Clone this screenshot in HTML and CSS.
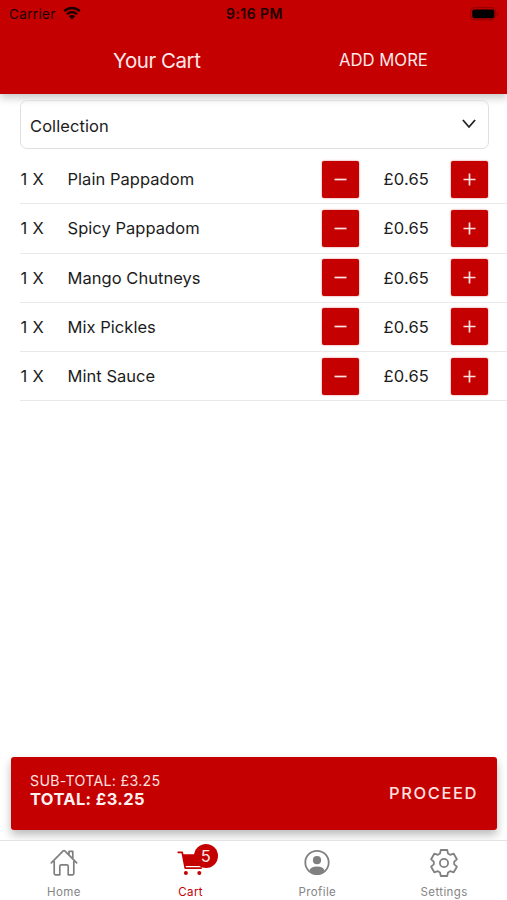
FILE: index.html
```html
<!DOCTYPE html>
<html lang="en">
<head>
<meta charset="utf-8">
<title>Your Cart</title>
<link rel="stylesheet" href="styles.css">
</head>
<body>
<div class="app">
  <header class="header">
    <div class="status">
      <div class="carrier"><span>Carrier</span>
        <svg width="18" height="14" viewBox="0 0 18 14"><path d="M1.2 5.1a11.2 11.2 0 0 1 15.6 0M4 8.1a7.2 7.2 0 0 1 10 0" fill="none" stroke="#1c0000" stroke-width="2.4"/><path d="M5.8 10.2a4.6 4.6 0 0 1 6.4 0L9 13.6z" fill="#1c0000"/></svg>
      </div>
      <div class="time">9:16 PM</div>
      <div class="battery"><svg width="30" height="14" viewBox="0 0 30 14"><rect x=".7" y=".7" width="25" height="12.2" rx="3.5" fill="none" stroke="#8e0000"/><rect x="2.3" y="2.5" width="22" height="8.8" rx="2" fill="#000"/><path d="M27.3 4.7q2.5 2.1 0 4.2z" fill="#8e0000"/></svg></div>
    </div>
    <div class="titlebar">
      <h1>Your Cart</h1>
      <div class="add">ADD MORE</div>
    </div>
  </header>
  <main>
    <div class="select"><span>Collection</span><svg width="14" height="10" viewBox="0 0 14 10"><path d="M.9 1l6.1 7 6.1-7" fill="none" stroke="#222" stroke-width="1.8"/></svg></div>
    <div class="list">
      <div class="row"><span class="qty">1 X</span><span class="name">Plain Pappadom</span><div class="btn"><svg width="13" height="13" viewBox="0 0 13 13"><path d="M.5 6.5h12"/></svg></div><span class="price">£0.65</span><div class="btn"><svg width="13" height="13" viewBox="0 0 13 13"><path d="M.5 6.5h12M6.5.5v12"/></svg></div></div>
      <div class="row"><span class="qty">1 X</span><span class="name">Spicy Pappadom</span><div class="btn"><svg width="13" height="13" viewBox="0 0 13 13"><path d="M.5 6.5h12"/></svg></div><span class="price">£0.65</span><div class="btn"><svg width="13" height="13" viewBox="0 0 13 13"><path d="M.5 6.5h12M6.5.5v12"/></svg></div></div>
      <div class="row"><span class="qty">1 X</span><span class="name">Mango Chutneys</span><div class="btn"><svg width="13" height="13" viewBox="0 0 13 13"><path d="M.5 6.5h12"/></svg></div><span class="price">£0.65</span><div class="btn"><svg width="13" height="13" viewBox="0 0 13 13"><path d="M.5 6.5h12M6.5.5v12"/></svg></div></div>
      <div class="row"><span class="qty">1 X</span><span class="name">Mix Pickles</span><div class="btn"><svg width="13" height="13" viewBox="0 0 13 13"><path d="M.5 6.5h12"/></svg></div><span class="price">£0.65</span><div class="btn"><svg width="13" height="13" viewBox="0 0 13 13"><path d="M.5 6.5h12M6.5.5v12"/></svg></div></div>
      <div class="row"><span class="qty">1 X</span><span class="name">Mint Sauce</span><div class="btn"><svg width="13" height="13" viewBox="0 0 13 13"><path d="M.5 6.5h12"/></svg></div><span class="price">£0.65</span><div class="btn"><svg width="13" height="13" viewBox="0 0 13 13"><path d="M.5 6.5h12M6.5.5v12"/></svg></div></div>
    </div>
  </main>
  <div class="checkout">
    <div class="totals"><div class="sub">SUB-TOTAL: £3.25</div><div class="total">TOTAL: £3.25</div></div>
    <div class="proceed">PROCEED</div>
  </div>
  <nav class="tabs">
    <div class="tab"><svg width="30" height="30" viewBox="0 0 30 30" fill="none" stroke="#808080" stroke-width="1.7" stroke-linejoin="round" stroke-linecap="round"><path d="M5.2 13v12.6q0 1.2 1.2 1.2h4.4v-8.6q0-1.4 1.4-1.4h5.6q1.4 0 1.4 1.4v8.6h4.4q1.2 0 1.2-1.2V13M2.3 14.8L14.2 2.9q.8-.7 1.6 0L27.7 14.8M20 6.8V3.4h3.8v7.2"/></svg><span class="label">Home</span></div>
    <div class="tab active"><svg width="30" height="30" viewBox="0 0 30 30"><path d="M2.2 4.3h4l3 15.8h16" fill="none" stroke="#c40000" stroke-width="1.7" stroke-linecap="round" stroke-linejoin="round"/><path d="M6.5 6.2h21.2l-2.5 11.8H8.8z" fill="#c40000"/><circle cx="9.9" cy="25.1" r="2" fill="#c40000"/><circle cx="23.3" cy="25.1" r="2" fill="#c40000"/></svg><span class="badge">5</span><span class="label">Cart</span></div>
    <div class="tab"><svg width="30" height="30" viewBox="0 0 30 30"><circle cx="15" cy="14.5" r="11.7" fill="none" stroke="#808080" stroke-width="1.8"/><circle cx="15" cy="12.2" r="4.1" fill="#808080"/><path d="M7.3 22.7q1.5-4.2 7.7-4.2t7.7 4.2q-3.2 3.4-7.7 3.4t-7.7-3.4z" fill="#808080"/></svg><span class="label">Profile</span></div>
    <div class="tab"><svg width="30" height="30" viewBox="-15 -15 30 30" fill="none" stroke="#808080" stroke-width="1.8" stroke-linejoin="round"><path d="M-4-9.5L-3.2-13H3.2L4-9.5 6.2-8.2 9.7-9.3 12.9-3.7 10.2-1.3V1.3L12.9 3.7 9.7 9.3 6.2 8.2 4 9.5 3.2 13H-3.2L-4 9.5-6.2 8.2-9.7 9.3-12.9 3.7-10.2 1.3V-1.3L-12.9-3.7-9.7-9.3-6.2-8.2z"/><circle r="4.1"/></svg><span class="label">Settings</span></div>
  </nav>
</div>
</body>
</html>
```
FILE: styles.css
```css
* { box-sizing: border-box; }
body { margin: 0; background: #fff; color: #1c1c1c; font-family: Inter, "Liberation Sans", sans-serif; font-size: 16.5px; }
.app { width: 507px; height: 900px; display: flex; flex-direction: column; overflow: hidden; white-space: nowrap; }
svg { display: block; flex: none; }
.header { height: 94px; flex: none; background: #c40000; box-shadow: 0 4px 8px rgba(0,0,0,.22); }
.status { height: 27px; display: grid; grid-template-columns: 1fr auto 1fr; align-items: center; padding: 0 7px 0 9px; color: #1c0000; font-size: 13.5px; }
.carrier { display: flex; align-items: center; gap: 7px; letter-spacing: .35px; }
.carrier svg { margin-top: -2px; }
.time { font-weight: 600; font-size: 14px; letter-spacing: .45px; }
.battery { display: flex; justify-content: flex-end; }
.titlebar { display: grid; grid-template-columns: 226px 1fr; height: 66px; align-items: center; padding-left: 113px; color: #ffe9e9; }
h1 { margin: 0; font-size: 20.5px; font-weight: 400; letter-spacing: -.45px; }
.add { font-size: 16.7px; margin-top: -1px; }
main { flex: 1; padding-top: 6px; }
.select { height: 49px; margin: 0 18px 0 20px; padding: 3px 13px 0 9px; border: 1px solid #e0e0e0; border-radius: 7px; display: flex; align-items: center; justify-content: space-between; letter-spacing: .08px; }
.select svg { margin-top: -5px; margin-right: -1px; }
.list { margin: 6px 0 0 20px; }
.row { height: 49.25px; display: grid; grid-template-columns: 47.5px 254.5px 37px 91.5px 37px; align-items: center; border-bottom: 1px solid #e9e9e9; }
.qty { letter-spacing: .3px; padding-left: .5px; }
.name { letter-spacing: .04px; }
.price { text-align: center; padding-left: 3px; letter-spacing: .15px; }
.btn { width: 37px; height: 37px; border-radius: 2px; background: #c40000; display: grid; place-items: center; box-shadow: 0 0 2px rgba(196,0,0,.6); }
.btn svg { stroke: #ffe3e3; stroke-width: 1.7; }
.checkout { flex: none; height: 73px; margin: 0 10px 10px 11px; border-radius: 3px; background: #c40000; color: #ffe0e0; display: flex; justify-content: space-between; padding: 0 20px 0 19px; box-shadow: 0 5px 10px rgba(0,0,0,.27); }
.totals { padding-top: 13.5px; }
.sub { font-size: 14.2px; line-height: 19px; letter-spacing: .28px; }
.total { font-size: 16.5px; line-height: 19px; font-weight: 700; letter-spacing: .35px; color: #fff0f0; }
.proceed { line-height: 73px; font-weight: 500; letter-spacing: 1.6px; margin-right: -1px; }
.tabs { height: 60px; flex: none; display: grid; grid-template-columns: repeat(4, 1fr); border-top: 1px solid #e3e3e3; background: #fff; position: relative; }
.tab { position: relative; display: flex; flex-direction: column; align-items: center; padding-top: 7px; padding-left: 1px; color: #858585; }
.label { font-size: 11.5px; line-height: 14px; margin-top: 7px; letter-spacing: .4px; }
.active { color: #c40000; }
.badge { position: absolute; left: 67px; top: 3px; width: 24px; height: 24px; border-radius: 12px; background: #c40000; color: #ffe5e5; text-align: center; line-height: 24px; font-size: 16.5px; }
```
